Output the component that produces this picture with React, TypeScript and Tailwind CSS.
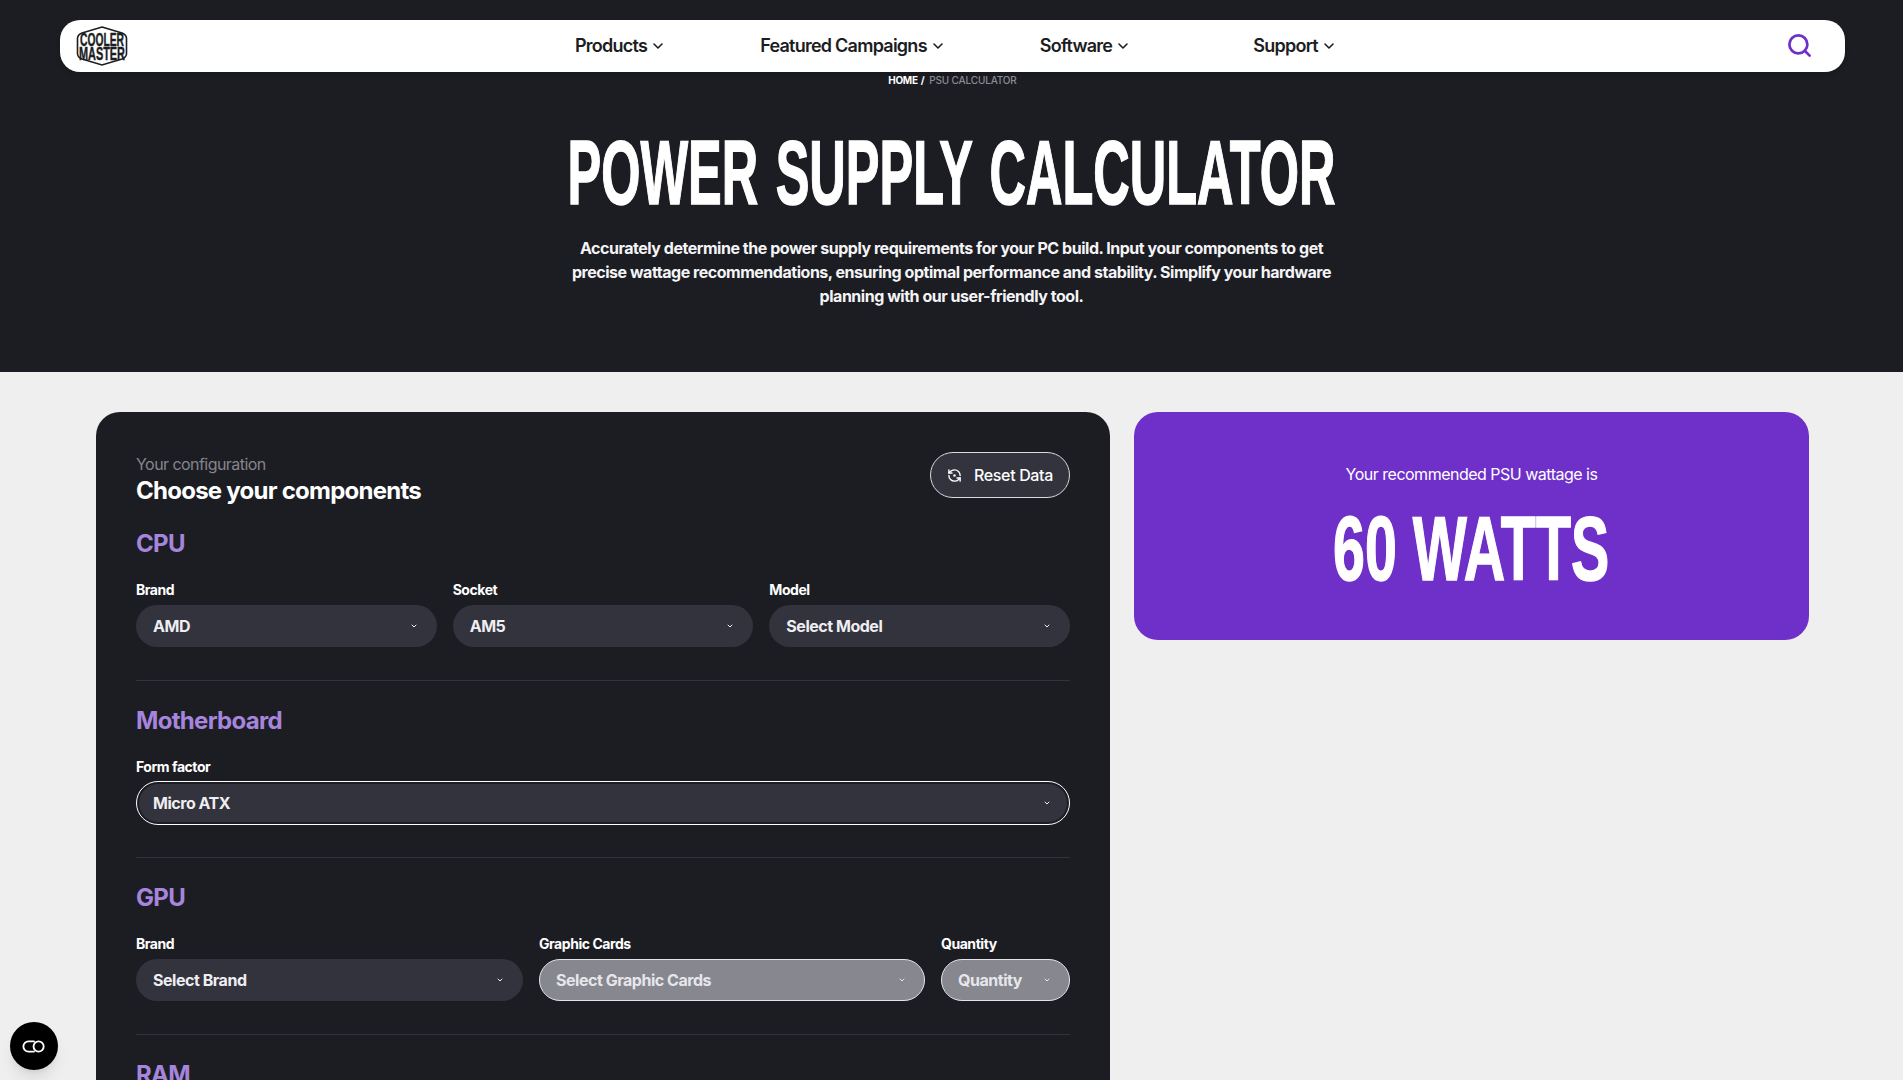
import React from "react";
import { ChevronDown, RefreshCcwDot, Search } from "lucide-react";

const sans = "font-['Inter','Liberation_Sans',sans-serif]";
const display = "font-['Liberation_Sans',Arial,sans-serif]";

function Logo() {
  return (
    <svg width="52" height="40" viewBox="0 0 52 40" className="shrink-0 overflow-visible">
      <path
        d="M26 1 L46 7 Q50 8.5 50.5 12 L50.5 28 Q50 31.5 46 33 L26 39 L6 33 Q2 31.5 1.5 28 L1.5 12 Q2 8.5 6 7 Z"
        fill="none"
        stroke="#1c1d23"
        strokeWidth="1.6"
      />
      <g transform="scale(1,1.75)" fontSize="10" fontWeight="700" fontFamily="Liberation Sans" fill="#1c1d23" stroke="#1c1d23" strokeWidth="0.25">
        <text x="4" y="11.6" textLength="44" lengthAdjust="spacingAndGlyphs">
          COOLER
        </text>
        <text x="3" y="19.2" textLength="46" lengthAdjust="spacingAndGlyphs">
          MASTER
        </text>
      </g>
    </svg>
  );
}

function NavItem({ label, className = "" }: { label: string; className?: string }) {
  return (
    <a className={`flex items-center gap-[3px] text-[18px] leading-6 font-semibold tracking-[-0.75px] text-[#1c1d23] ${className}`}>
      {label}
      <ChevronDown size={16} strokeWidth={2.4} />
    </a>
  );
}

function Select({
  label,
  value,
  className = "",
  tone = "normal",
}: {
  label: string;
  value: string;
  className?: string;
  tone?: "normal" | "focus" | "disabled";
}) {
  const base = "flex items-center justify-between rounded-full text-[16px] font-bold tracking-[-0.47px]";
  return (
    <div className={`flex flex-col gap-[7px] ${className}`}>
      <label className="text-[14px] leading-[17px] font-bold tracking-[-0.45px] text-white">{label}</label>
      {tone === "focus" ? (
        <div className="-my-px h-[44px] rounded-full border border-white p-[2px]">
          <div className={`${base} h-full bg-[#33333e] pr-[16px] pl-[14px] text-[#eeeef2]`}>
            <span>{value}</span>
            <ChevronDown size={8} strokeWidth={3} />
          </div>
        </div>
      ) : tone === "disabled" ? (
        <div className={`${base} h-[42px] border border-[#e4e4e8] bg-[#87878f] pr-[18px] pl-[16px] text-[#e6e6ea]`}>
          <span>{value}</span>
          <ChevronDown size={8} strokeWidth={3} />
        </div>
      ) : (
        <div className={`${base} h-[42px] bg-[#33333e] pr-[19px] pl-[17px] text-[#eeeef2]`}>
          <span>{value}</span>
          <ChevronDown size={8} strokeWidth={3} />
        </div>
      )}
    </div>
  );
}

function Section({ title, children, last }: { title: string; children: React.ReactNode; last?: boolean }) {
  return (
    <section className={last ? "" : "mb-[24px] border-b border-[#33343b] pb-[33px]"}>
      <h3 className="mb-[21px] text-[24px] leading-[32px] font-bold tracking-[-0.7px] text-[#a685dc]">{title}</h3>
      {children}
    </section>
  );
}

export default function App() {
  return (
    <div className={`relative h-[1080px] overflow-hidden bg-[#efefef] ${sans}`}>
      {/* Hero */}
      <header className="h-[372px] bg-[#1c1d23] pt-[20px]">
        <nav className="mr-[58px] ml-[60px] flex h-[52px] items-center rounded-[20px] bg-white pr-[32px] pl-[16px] shadow-md">
          <Logo />
          <div className="ml-[447px] flex items-center gap-[94px]">
            <NavItem label="Products" />
            <NavItem label="Featured Campaigns" />
            <NavItem label="Software" />
            <NavItem label="Support" className="ml-[28px]" />
          </div>
          <Search size={27} strokeWidth={2.4} className="mb-[2px] ml-auto text-[#6e30c9]" />
        </nav>

        <div className="mt-[3px] flex h-[10px] items-center justify-center gap-[3px] pl-[2px] text-[10px] leading-[10px] font-bold tracking-[-0.3px]">
          <span className="text-white">HOME</span>
          <span className="mr-[2px] text-white">/</span>
          <span className="font-medium tracking-[-0.15px] text-[#8b8b92]">PSU CALCULATOR</span>
        </div>

        <h1
          className={`mt-[38px] scale-x-[0.555] text-center text-[91px] leading-[100px] font-bold whitespace-nowrap text-white [word-spacing:6px] [-webkit-text-stroke:1.5px_white] ${display}`}
        >
          POWER SUPPLY CALCULATOR
        </h1>
        <p className="mx-auto mt-[13px] w-[780px] text-center text-[16px] leading-[24px] font-bold tracking-[-0.47px] text-[#f4f4f6]">
          Accurately determine the power supply requirements for your PC build. Input your components to get precise
          wattage recommendations, ensuring optimal performance and stability. Simplify your hardware planning with our
          user-friendly tool.
        </p>
      </header>

      {/* Calculator */}
      <main className="mt-[40px] mr-[94px] ml-[96px] flex items-start gap-[24px]">
        <div className="w-[1014px] shrink-0 rounded-[24px] bg-[#1c1d23] px-[40px] pt-[40px] pb-[40px]">
          <div className="mb-[24px] flex items-start justify-between">
            <div>
              <p className="text-[16px] leading-[25px] tracking-[-0.55px] text-[#85858c]">Your configuration</p>
              <h2 className="text-[24px] leading-[27px] font-bold tracking-[-0.75px] text-white">Choose your components</h2>
            </div>
            <button className="flex h-[46px] w-[140px] items-center justify-center gap-[12px] rounded-full border border-[#d9d9de] bg-[#33333e] text-[16px] font-medium tracking-[-0.35px] text-white">
              <RefreshCcwDot size={15} strokeWidth={2.2} />
              Reset Data
            </button>
          </div>

          <Section title="CPU">
            <div className="grid grid-cols-3 gap-[16px]">
              <Select label="Brand" value="AMD" />
              <Select label="Socket" value="AM5" />
              <Select label="Model" value="Select Model" />
            </div>
          </Section>

          <Section title="Motherboard">
            <Select label="Form factor" value="Micro ATX" tone="focus" />
          </Section>

          <Section title="GPU">
            <div className="flex gap-[16px]">
              <Select label="Brand" value="Select Brand" className="w-[387px]" />
              <Select label="Graphic Cards" value="Select Graphic Cards" tone="disabled" className="w-[386px]" />
              <Select label="Quantity" value="Quantity" tone="disabled" className="w-[129px]" />
            </div>
          </Section>

          <Section title="RAM" last>
            <div className="h-[100px]" />
          </Section>
        </div>

        <aside className="flex h-[228px] w-[675px] shrink-0 flex-col items-center rounded-[24px] bg-[#6e30c9] pt-[50px]">
          <p className="text-[16px] leading-6 font-normal tracking-[-0.5px] text-white">Your recommended PSU wattage is</p>
          <p
            className={`mt-[13px] scale-x-[0.63] text-center text-[91px] leading-[100px] font-bold whitespace-nowrap text-white [-webkit-text-stroke:1.5px_white] ${display}`}
          >
            60 WATTS
          </p>
        </aside>
      </main>

      {/* Accessibility toggle */}
      <button className="absolute bottom-[10px] left-[10px] flex h-[48px] w-[48px] items-center justify-center rounded-full bg-black shadow-lg">
        <svg width="24" height="13" viewBox="0 0 26 14" fill="none" stroke="white" strokeWidth="2">
          <path d="M13 1.5 H7 a5.5 5.5 0 0 0 0 11 H13" strokeLinecap="round" />
          <circle cx="18" cy="7" r="5.5" />
        </svg>
      </button>
    </div>
  );
}
